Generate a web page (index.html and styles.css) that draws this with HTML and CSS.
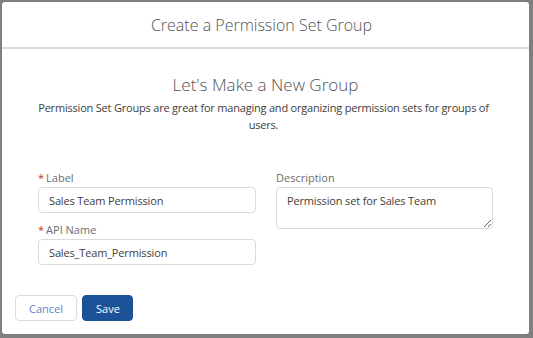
FILE: index.html
```html
<!DOCTYPE html>
<html lang="en">
<head>
    <meta charset="UTF-8">
    <meta name="viewport" content="width=device-width, initial-scale=1.0">
    <title>Create a Permission Set Group</title>
    <link rel="stylesheet" href="styles.css">
</head>
<body>
    <div class="modal">
        <div class="modal-header">
            <h1>Create a Permission Set Group</h1>
        </div>
        <div class="modal-body">
            <h2>Let's Make a New Group</h2>
            <p class="intro">Permission Set Groups are great for managing and organizing permission sets for groups of users.</p>

            <div class="form">
                <div class="col">
                    <div class="field">
                        <label><span class="req">*</span>Label</label>
                        <input type="text" value="Sales Team Permission">
                    </div>
                    <div class="field">
                        <label><span class="req">*</span>API Name</label>
                        <input type="text" value="Sales_Team_Permission">
                    </div>
                </div>
                <div class="col">
                    <div class="field">
                        <label>Description</label>
                        <textarea>Permission set for Sales Team</textarea>
                    </div>
                </div>
            </div>
        </div>
        <div class="modal-footer">
            <button class="btn btn-neutral">Cancel</button>
            <button class="btn btn-brand">Save</button>
        </div>
    </div>
</body>
</html>
```

FILE: styles.css
```css
* {
    margin: 0;
    padding: 0;
    box-sizing: border-box;
    font-family: 'Open Sans', 'Liberation Sans', sans-serif;
}

body {
    background: #7f7f7f;
    padding: 2px 4px 0 2px;
    overflow: hidden;
}

.modal {
    background: #fff;
    width: 527px;
    height: 332px;
    border-radius: 3px;
    display: flex;
    flex-direction: column;
}

.modal-header {
    height: 47px;
    border-bottom: 2px solid #dddbda;
    display: flex;
    align-items: center;
    justify-content: center;
    padding-right: 8px;
}

.modal-header h1 {
    font-size: 16px;
    font-weight: 300;
    color: #545454;
}

.modal-body {
    padding: 24px 36px 0;
    flex: 1;
}

.modal-body h2 {
    text-align: center;
    font-size: 17px;
    font-weight: 300;
    color: #545454;
    line-height: 24px;
}

.intro {
    text-align: center;
    font-size: 11px;
    letter-spacing: -0.2px;
    color: #3e3e3c;
    line-height: 17px;
    margin: 2px -4px 0 -8px;
}

.form {
    display: grid;
    grid-template-columns: 218px 217px;
    gap: 20px;
    margin-top: 37px;
}

.field {
    margin-bottom: 9px;
}

.field label {
    display: block;
    font-size: 11px;
    color: #6b6d70;
    line-height: 16px;
    margin-bottom: 1px;
}

.req {
    color: #c23934;
    margin-right: 2px;
}

.field input,
.field textarea {
    width: 100%;
    border: 1px solid #dddbda;
    border-radius: 4px;
    font-size: 11px;
    letter-spacing: -0.15px;
    color: #3e3e3c;
    padding: 0 10px;
    outline: none;
}

.field input {
    height: 26px;
}

.field textarea {
    height: 42px;
    padding-top: 5px;
    resize: vertical;
}

.modal-footer {
    padding: 0 0 13px 13px;
    display: flex;
    gap: 5px;
}

.btn {
    height: 26px;
    border-radius: 4px;
    font-size: 11px;
    padding: 0 13px;
    cursor: pointer;
}

.btn-neutral {
    background: #fff;
    border: 1px solid #dddbda;
    color: #5b82c4;
    width: 62px;
}

.btn-brand {
    background: #1b5297;
    border: 1px solid #1b5297;
    color: #fff;
    width: 51px;
}
```
